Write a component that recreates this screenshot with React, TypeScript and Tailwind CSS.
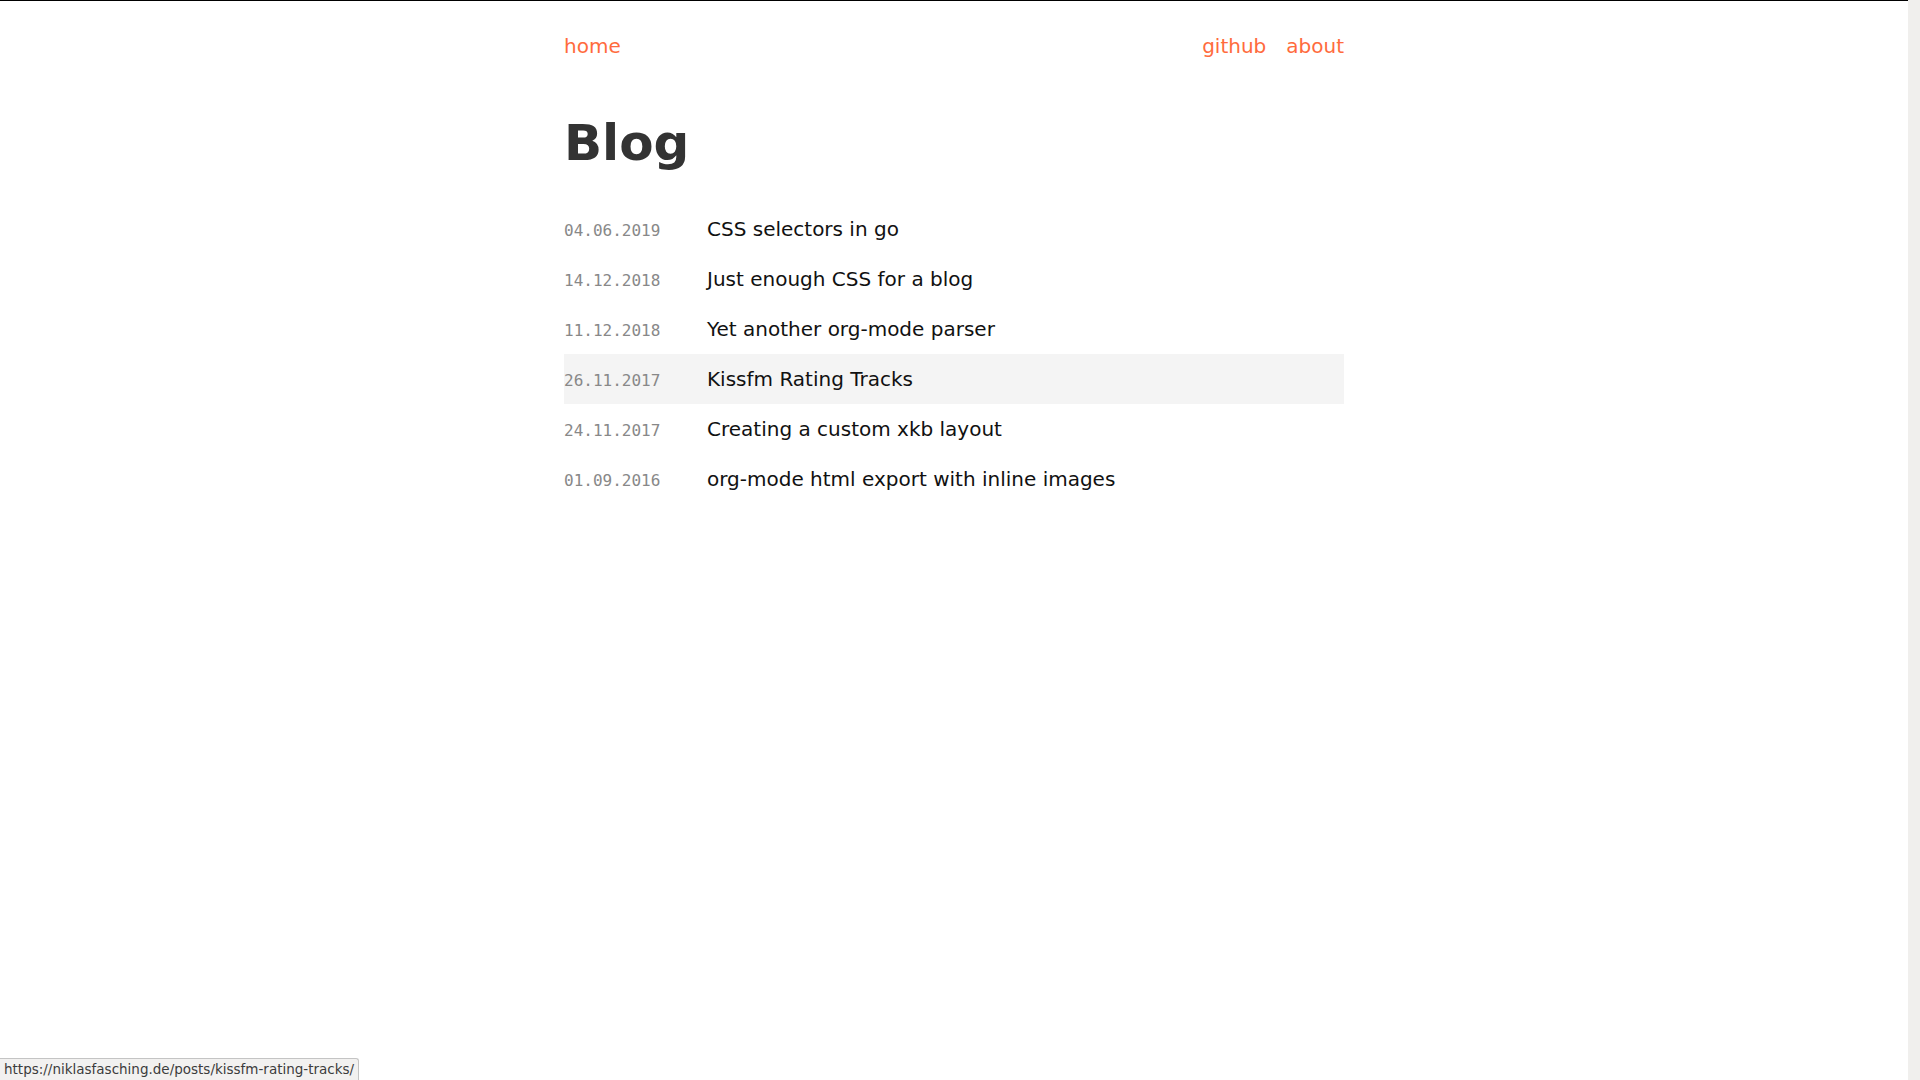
import React from "react"

const posts = [
  { date: "04.06.2019", title: "CSS selectors in go" },
  { date: "14.12.2018", title: "Just enough CSS for a blog" },
  { date: "11.12.2018", title: "Yet another org-mode parser" },
  { date: "26.11.2017", title: "Kissfm Rating Tracks", hover: true },
  { date: "24.11.2017", title: "Creating a custom xkb layout" },
  { date: "01.09.2016", title: "org-mode html export with inline images" },
]

export default function App() {
  return (
    <div className="relative flex min-h-screen bg-white font-['DejaVu_Sans',sans-serif]">
      <div className="flex-1 border-t border-black">
        <div className="mx-auto w-[780px]">
          {/* top nav */}
          <nav className="flex justify-between pt-[30px] text-[20px] leading-[30px] text-[#ff6b3d]">
            <a href="#">home</a>
            <div className="flex gap-[20px]">
              <a href="#">github</a>
              <a href="#">about</a>
            </div>
          </nav>

          <h1 className="mt-[51px] text-[50px] font-bold leading-[62px] text-[#333333]">Blog</h1>

          <ul className="mt-[30px]">
            {posts.map((p) => (
              <li
                key={p.date}
                className={`flex h-[50px] items-baseline leading-[50px] ${p.hover ? "bg-[#f4f4f4]" : ""}`}
              >
                <span className="w-[143px] shrink-0 font-['DejaVu_Sans_Mono',monospace] text-[16px] text-[#888888]">
                  {p.date}
                </span>
                <a href="#" className="text-[20px] text-[#111111]">
                  {p.title}
                </a>
              </li>
            ))}
          </ul>
        </div>
      </div>

      {/* scrollbar track */}
      <div className="w-[12px] shrink-0 bg-[#f0efed]" />

      {/* link status bubble */}
      <div className="absolute bottom-0 left-0 h-[22px] rounded-tr-[3px] border-t border-r border-[#c4c4c4] bg-[#f2f1f0] px-[4px] text-[13.5px] leading-[21px] text-[#3c3c3c]">
        https://niklasfasching.de/posts/kissfm-rating-tracks/
      </div>
    </div>
  )
}
